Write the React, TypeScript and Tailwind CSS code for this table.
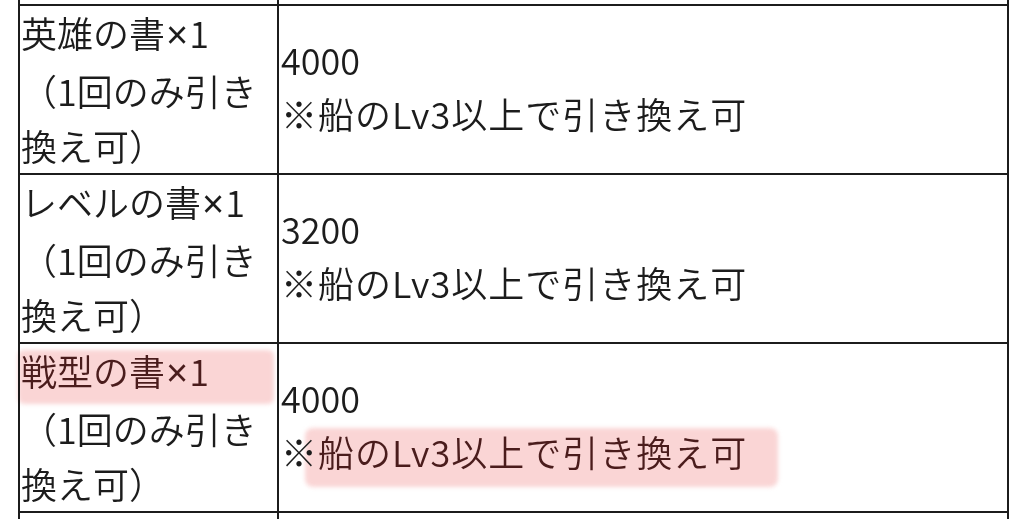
const rows = [
  { name: '英雄の書', points: '4000', marked: false },
  { name: 'レベルの書', points: '3200', marked: false },
  { name: '戦型の書', points: '4000', marked: true },
];

const font = { fontFamily: '"Noto Sans CJK JP", "Noto Sans", sans-serif' };

export default function App() {
  return (
    <div className="h-[519px] w-[1024px] overflow-hidden bg-white font-[350] text-[#1c1c1c]" style={font}>
      <div className="ml-[18px] w-[991px] border-x-2 border-[#1c1c1c]">
        {/* tail of the previous row */}
        <div className="flex h-[6px] border-b-2 border-[#1c1c1c]">
          <div className="w-[259px] border-r-2 border-[#1c1c1c]" />
        </div>

        {rows.map((row) => (
          <div key={row.name} className="flex h-[169px] border-b-2 border-[#1c1c1c]">
            <div className="relative flex w-[259px] items-center border-r-2 border-[#1c1c1c] pb-[1px] pl-[1px] text-[36px] leading-[55px]">
              {row.marked && (
                <div className="absolute left-[-2px] top-[6px] h-[54px] w-[256px] rounded-md bg-[#f7b9b9]/60 mix-blend-multiply blur-[2px]" />
              )}
              <div className="relative whitespace-nowrap">
                <div className={row.marked ? 'text-[#4a1c1c]' : ''}>
                  {row.name}
                  <span className="px-[1px] font-['Liberation_Sans'] text-[38px]">×</span>1
                </div>
                <div>（1回のみ引き</div>
                <div>換え可）</div>
              </div>
            </div>
            <div className="relative flex flex-1 items-center pb-[8px] pl-[2px] text-[36px] leading-[54px]">
              {row.marked && (
                <div className="absolute left-[26px] top-[84px] h-[59px] w-[473px] rounded-lg bg-[#f7b9b9]/60 mix-blend-multiply blur-[2px]" />
              )}
              <div className="relative whitespace-nowrap">
                <div>{row.points}</div>
                <div className="tracking-[1px]">
                  ※<span className={row.marked ? 'text-[#4a1c1c]' : ''}>船のLv3以上で引き換え可</span>
                </div>
              </div>
            </div>
          </div>
        ))}

        {/* head of the next row */}
        <div className="flex h-[20px]">
          <div className="w-[259px] border-r-2 border-[#1c1c1c]" />
        </div>
      </div>
    </div>
  );
}
